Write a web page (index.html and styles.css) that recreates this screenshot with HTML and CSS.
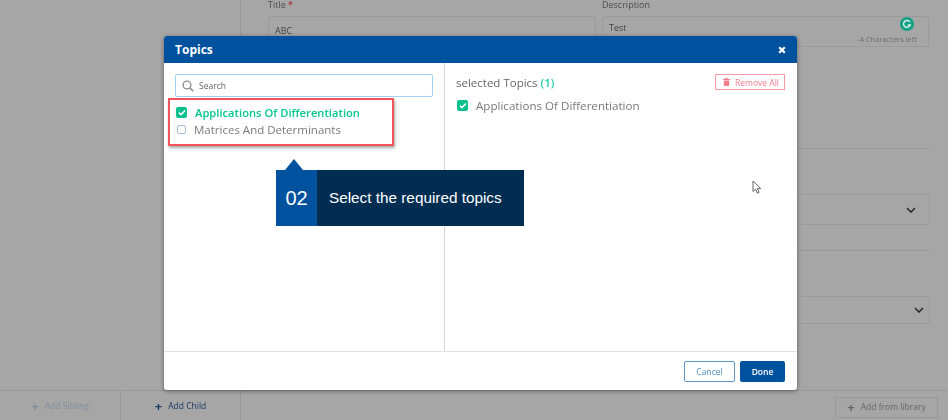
FILE: index.html
```html
<!DOCTYPE html>
<html lang="en">
<head>
<meta charset="UTF-8">
<meta name="viewport" content="width=device-width, initial-scale=1.0">
<title>Topics</title>
<link rel="stylesheet" href="styles.css">
</head>
<body>

<div class="page">
  <div class="content">
    <div class="sidebar"></div>
    <div class="main">
      <div class="form-row">
        <div class="field">
          <label>Title <span class="req">*</span></label>
          <div class="box title-box">ABC</div>
        </div>
        <div class="field">
          <label>Description</label>
          <div class="box desc">
            Test
            <svg class="grammarly" width="14" height="14" viewBox="0 0 14 14"><circle cx="7" cy="7" r="7" fill="#13a085"/><path d="M9.8 5A3.4 3.4 0 1 0 10.2 8H7.6" fill="none" stroke="#d5efe9" stroke-width="1.5"/></svg>
            <span class="chars">-4 Characters left</span>
          </div>
        </div>
      </div>
      <div class="divider first"></div>
      <div class="select-box">
        <svg width="10" height="6" viewBox="0 0 10 6"><path d="M1 1l4 4 4-4" fill="none" stroke="#2a2a2a" stroke-width="1.6"/></svg>
      </div>
      <div class="divider second"></div>
      <div class="select-box short">
        <svg width="10" height="6" viewBox="0 0 10 6"><path d="M1 1l4 4 4-4" fill="none" stroke="#2a2a2a" stroke-width="1.6"/></svg>
      </div>
    </div>
  </div>
  <div class="bottom-bar">
    <div class="bottom-btn muted"><span class="plus">+</span> Add Sibling</div>
    <div class="bottom-btn active"><span class="plus">+</span> Add Child</div>
    <div class="bottom-right">
      <div class="library-btn"><span class="plus">+</span> Add from library</div>
    </div>
  </div>
</div>

<div class="modal">
  <div class="modal-header">
    <span>Topics</span>
    <svg width="8" height="8" viewBox="0 0 8 8"><path d="M1.2 1.2l5.6 5.6M6.8 1.2L1.2 6.8" stroke="#fff" stroke-width="2.2"/></svg>
  </div>
  <div class="modal-body">
    <div class="pane-left">
      <div class="search">
        <svg width="12" height="12" viewBox="0 0 12 12"><circle cx="5" cy="5" r="3.9" fill="none" stroke="#8a8a8a" stroke-width="1.3"/><path d="M8 8l3.3 3.3" stroke="#8a8a8a" stroke-width="1.6"/></svg>
        <span>Search</span>
      </div>
      <div class="topic checked">
        <span class="check on"><svg width="8" height="7" viewBox="0 0 8 7"><path d="M1 3.6l2 2 4-4.2" fill="none" stroke="#fff" stroke-width="1.5"/></svg></span>
        Applications Of Differentiation
      </div>
      <div class="topic">
        <span class="check"></span>
        Matrices And Determinants
      </div>
    </div>
    <div class="pane-right">
      <div class="selected-head">
        <div class="selected-title">selected Topics <b>(1)</b></div>
        <div class="remove-btn">
          <svg width="7" height="8" viewBox="0 0 7 8"><path d="M0 1.5h7M2.3 1V.3h2.4V1" stroke="#f27d8b" fill="none"/><path d="M.8 2.5h5.4V8H.8z" fill="#f27d8b"/></svg>
          Remove All
        </div>
      </div>
      <div class="selected-item">
        <span class="check on"><svg width="8" height="7" viewBox="0 0 8 7"><path d="M1 3.6l2 2 4-4.2" fill="none" stroke="#fff" stroke-width="1.5"/></svg></span>
        Applications Of Differentiation
      </div>
    </div>
  </div>
  <div class="modal-footer">
    <div class="btn-cancel">Cancel</div>
    <div class="btn-done">Done</div>
  </div>
</div>

<div class="highlight"></div>

<div class="callout">
  <div class="callout-num">02</div>
  <div class="callout-text">Select the required topics</div>
</div>

<svg class="pointer" width="11" height="15" viewBox="0 0 11 15"><path d="M1 1v10.5l2.6-2.3 1.7 4 1.8-.8-1.7-3.8h3.4z" fill="#fff" stroke="#555" stroke-width="0.9"/></svg>

</body>
</html>
```

FILE: styles.css
```css
body {
  font-family: 'Open Sans', sans-serif;
  margin: 0;
  width: 948px;
  height: 420px;
  overflow: hidden;
  position: relative;
  background-color: #a6a6a6;
}

/* page behind the dialog */
.page {
  height: 420px;
  display: flex;
  flex-direction: column;
  color: #555;
  filter: blur(0.5px);
}
.content {
  flex: 1;
  display: flex;
  min-height: 0;
}
.sidebar {
  width: 240px;
  border-right: 1px solid #999;
}
.main {
  flex: 1;
  padding-left: 27px;
  padding-right: 18px;
}
.form-row {
  display: grid;
  grid-template-columns: 328px 327px;
  gap: 6px;
}
.field label {
  display: block;
  font-size: 9px;
  line-height: 9px;
  height: 16px;
  color: #4e4e4e;
}
.req {
  color: #b01818;
}
.box {
  height: 31px;
  border: 1px solid #9b9b9b;
  border-radius: 3px;
  box-sizing: border-box;
  font-size: 9px;
  line-height: 12px;
  padding: 5px 6px;
  color: #444;
  position: relative;
}
.title-box {
  padding-top: 8px;
}
.grammarly {
  position: absolute;
  right: 14px;
  top: 0px;
}
.chars {
  position: absolute;
  right: 11px;
  bottom: 2px;
  font-size: 7.5px;
  line-height: 10px;
  color: #6f6f6f;
}
.divider {
  height: 1px;
  background-color: #999;
}
.divider.first {
  margin-top: 101px;
}
.divider.second {
  margin-top: 25px;
}
.select-box {
  height: 31px;
  margin-top: 45px;
  border: 1px solid #9b9b9b;
  border-radius: 3px;
  box-sizing: border-box;
  display: flex;
  align-items: center;
  justify-content: flex-end;
  padding-right: 13px;
}
.select-box.short {
  height: 28px;
  padding-right: 5px;
}
.bottom-bar {
  height: 30px;
  flex-shrink: 0;
  display: flex;
  border-top: 1px solid #999;
  box-sizing: border-box;
  font-size: 8.5px;
}
.bottom-btn {
  width: 121px;
  box-sizing: border-box;
  border-right: 1px solid #999;
  display: flex;
  align-items: center;
  justify-content: center;
  gap: 6px;
}
.bottom-btn.muted {
  color: #7f8f9f;
}
.bottom-btn.active {
  width: 120px;
  color: #163d66;
}
.plus {
  font-size: 13px;
  line-height: 12px;
  font-weight: 700;
}
.bottom-right {
  flex: 1;
  display: flex;
  justify-content: flex-end;
  padding: 6px 10px 2px 0;
}
.library-btn {
  width: 103px;
  box-sizing: border-box;
  border: 1px solid #999;
  display: flex;
  align-items: center;
  justify-content: center;
  gap: 6px;
  padding-bottom: 2px;
  color: #666;
}

/* dialog */
.modal {
  position: absolute;
  left: 164px;
  top: 36px;
  width: 633px;
  height: 354px;
  background-color: #fff;
  border-radius: 3px;
  box-shadow: 0 1px 4px rgba(0, 0, 0, 0.45);
  display: flex;
  flex-direction: column;
  overflow: hidden;
  filter: blur(0.3px);
}
.modal-header {
  height: 27px;
  flex-shrink: 0;
  background-color: #00519e;
  color: #fff;
  font-size: 12px;
  font-weight: 700;
  display: flex;
  align-items: center;
  justify-content: space-between;
  padding: 0 11px;
}
.modal-body {
  flex: 1;
  display: flex;
  min-height: 0;
}
.pane-left {
  width: 281px;
  box-sizing: border-box;
  border-right: 1px solid #d5d5d5;
  padding: 11px 11px 0;
}
.search {
  width: 258px;
  height: 23px;
  box-sizing: border-box;
  border: 1px solid #a3d3f2;
  border-radius: 2px;
  display: flex;
  align-items: center;
  gap: 5px;
  padding-left: 6px;
  font-size: 8.5px;
  color: #666;
}
.topic {
  display: flex;
  align-items: center;
  gap: 8px;
  height: 16px;
  font-size: 11.5px;
  color: #7a7a7a;
  padding-left: 2px;
}
.topic.checked {
  margin-top: 7px;
  margin-bottom: 1px;
  padding-left: 1px;
  color: #06c78f;
  font-size: 11.2px;
  font-weight: 600;
}
.check {
  width: 9px;
  height: 9px;
  box-sizing: border-box;
  border: 1px solid #9fbbd8;
  border-radius: 2px;
  flex-shrink: 0;
  display: flex;
  align-items: center;
  justify-content: center;
}
.check.on {
  width: 11px;
  height: 11px;
  border: 0;
  background-color: #0cc08d;
}
.pane-right {
  flex: 1;
  padding: 10px 12px 0 11px;
}
.selected-head {
  display: flex;
  justify-content: space-between;
  align-items: center;
  height: 18px;
}
.selected-title {
  font-size: 11.5px;
  color: #666;
}
.selected-title b {
  color: #1fd0a8;
  font-weight: 600;
}
.remove-btn {
  width: 70px;
  height: 16px;
  box-sizing: border-box;
  border: 1px solid #f79aa5;
  display: flex;
  align-items: center;
  justify-content: center;
  gap: 5px;
  padding-left: 2px;
  font-size: 8.5px;
  color: #f27d8b;
}
.selected-item {
  display: flex;
  align-items: center;
  gap: 8px;
  margin-top: 6px;
  height: 16px;
  padding-left: 1px;
  font-size: 11.6px;
  color: #7a7a7a;
}
.modal-footer {
  height: 39px;
  flex-shrink: 0;
  box-sizing: border-box;
  border-top: 1px solid #e2e2e2;
  display: flex;
  justify-content: flex-end;
  gap: 5px;
  padding: 9px 12px 8px 0;
  font-size: 8.5px;
}
.btn-cancel {
  width: 51px;
  box-sizing: border-box;
  border: 1px solid #5d97c9;
  border-radius: 2px;
  color: #4d8bc0;
  display: flex;
  align-items: center;
  justify-content: center;
}
.btn-done {
  width: 45px;
  background-color: #00519e;
  border-radius: 2px;
  color: #fff;
  font-weight: 600;
  display: flex;
  align-items: center;
  justify-content: center;
}

/* annotations on top of the dialog */
.highlight {
  position: absolute;
  left: 168px;
  top: 98px;
  width: 226px;
  height: 48px;
  box-sizing: border-box;
  border: 2px solid #f2545b;
  box-shadow: 1px 2px 3px rgba(0, 0, 0, 0.35);
}
.callout {
  position: absolute;
  left: 276px;
  top: 170px;
  width: 248px;
  height: 56px;
  display: flex;
  font-family: 'Liberation Sans', sans-serif;
  color: #fff;
}
.callout::before {
  content: "";
  position: absolute;
  left: 9px;
  top: -11px;
  border-left: 9px solid transparent;
  border-right: 9px solid transparent;
  border-bottom: 11px solid #00519e;
}
.callout-num {
  width: 41px;
  background-color: #00519e;
  font-size: 20px;
  display: flex;
  align-items: center;
  justify-content: center;
}
.callout-text {
  flex: 1;
  background-color: #012d52;
  font-size: 15.3px;
  display: flex;
  align-items: center;
  padding-left: 12px;
}
.pointer {
  position: absolute;
  left: 752px;
  top: 180px;
}
```
